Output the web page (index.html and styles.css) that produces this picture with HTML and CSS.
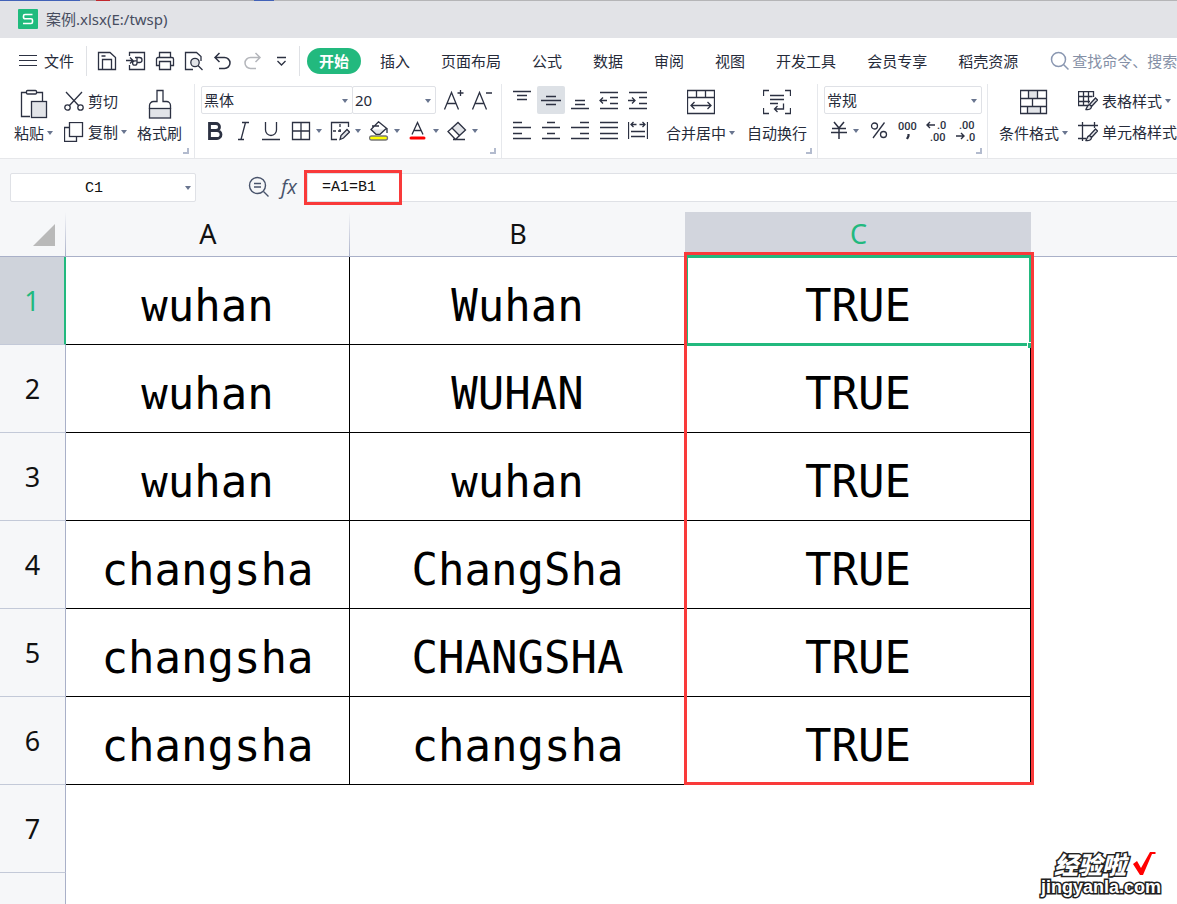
FILE: index.html
```html
<!DOCTYPE html>
<html lang="zh-CN">
<head>
<meta charset="utf-8">
<title>案例.xlsx</title>
<link rel="stylesheet" href="styles.css">
</head>
<body>
<div class="app">
  <header class="titlebar">
    <svg class="logo" width="20" height="20" viewBox="0 0 20 20"><rect width="20" height="20" rx="1" fill="#1fbb7d"/><path d="M14.5 5.500H7a1.500 1.500 0 0 0-1.500 1.500v1.300a1.500 1.500 0 0 0 1.500 1.500h6a1.500 1.500 0 0 1 1.500 1.500v1.700a1.500 1.500 0 0 1-1.500 1.500H5" fill="none" stroke="#fff" stroke-width="1.600"/></svg>
    <span class="doc-name">案例.xlsx(E:/twsp)</span>
  </header>

  <nav class="menubar">
    <button class="file-menu"><svg class="ic" width="18" height="14" viewBox="0 0 18 14"><path d="M0 1.500h18M0 6.500h18M0 11.500h18" stroke-width="1.200"/></svg>文件</button>
    <div class="quick">
      <button aria-label="保存"><svg class="ic" width="20" height="20" viewBox="0 0 20 20"><path d="M1.500 1.500h11.500l5.500 5v12h-17zM5.500 18V8.500h9V18M4.500 5h4"/></svg></button>
      <button aria-label="输出为PDF"><svg class="ic" width="20" height="20" viewBox="0 0 20 20"><path d="M3.500 5V1.500h15v17h-15V14M0 9.500h6.500M4 6.500l3 3-3 3M9 6.500h4.500a2.500 2.500 0 0 1 0 5H11M11 6.500v5.500a2.200 2.200 0 1 1-2.200-2.200h1.500"/></svg></button>
      <button aria-label="打印"><svg class="ic" width="20" height="20" viewBox="0 0 20 20"><path d="M4.500 6V1.500h11V6M4.500 14.500h-3V8a1.500 1.500 0 0 1 1.500-1.500h14A1.500 1.500 0 0 1 18.500 8v6.500h-3M4.500 10.500h11v8h-11z"/></svg></button>
      <button aria-label="打印预览"><svg class="ic" width="20" height="20" viewBox="0 0 20 20"><path d="M9 18.500H1.500v-17h11l4.500 4V10M14 14.500l4.500 4.500"/><circle cx="11" cy="11.500" r="4.200" fill="#e2e4e8"/></svg></button>
      <button aria-label="撤销"><svg class="ic" width="20" height="20" viewBox="0 0 20 20"><path d="M6.500 2l-4.500 4.500 4.500 4.500M2 6.500h9.500a5.500 5.500 0 0 1 0 11H6" stroke-width="1.500"/></svg></button>
      <button aria-label="恢复"><svg class="ic faint" width="20" height="20" viewBox="0 0 20 20"><path d="M13.500 2l4.500 4.500-4.500 4.500M18 6.500H8.500a5.500 5.500 0 0 0 0 11H14" stroke-width="1.500"/></svg></button>
      <button aria-label="更多"><svg class="ic" width="20" height="20" viewBox="0 0 20 20"><path d="M6 6.500h9M6.500 10l4 4 4-4"/></svg></button>
    </div>
    <div class="tabs">
      <button class="tab active">开始</button><button class="tab">插入</button><button class="tab">页面布局</button><button class="tab">公式</button><button class="tab">数据</button><button class="tab">审阅</button><button class="tab">视图</button><button class="tab">开发工具</button><button class="tab">会员专享</button><button class="tab">稻壳资源</button>
    </div>
    <label class="search"><svg width="20" height="20" viewBox="0 0 20 20" fill="none" stroke="#8a97b1" stroke-width="1.500"><circle cx="8.500" cy="8.500" r="7"/><path d="M13.500 13.500l5 5"/></svg><input type="text" aria-label="搜索" placeholder="查找命令、搜索"></label>
  </nav>

  <section class="ribbon">
    <div class="group clipboard">
      <button class="big paste"><svg class="ic" width="28" height="30" viewBox="0 0 28 30"><path d="M10 27.500H1.500v-24h5M17 3.500h5.500V12"/><rect x="6.500" y="1.500" width="10" height="3.500" rx="1"/><rect x="11.500" y="12.500" width="15" height="16" fill="#e2e4e8"/></svg><span class="caret-label">粘贴</span></button>
      <div class="stack">
        <button class="line"><svg class="ic" width="20" height="20" viewBox="0 0 20 20"><path d="M2 1l13 14M18 1L5 15"/><circle cx="3.500" cy="16.500" r="2.700"/><circle cx="16.500" cy="16.500" r="2.700"/></svg>剪切</button>
        <button class="line"><svg class="ic" width="20" height="20" viewBox="0 0 20 20"><path d="M5.500 5.500h-5v14h12v-5"/><rect x="5.500" y=".5" width="13" height="14"/></svg><span class="caret-label">复制</span></button>
      </div>
      <button class="big"><svg class="ic" width="26" height="30" viewBox="0 0 26 30"><path d="M2.500 20v-3.500a4 4 0 0 1 4-4h3.500v-11h6v11h3.500a4 4 0 0 1 4 4V20"/><rect x="2.500" y="19.500" width="21" height="9.500" fill="#e2e4e8"/></svg>格式刷</button>
      <i class="corner"></i>
    </div>

    <div class="group font">
      <div class="row">
        <span class="pick name"><select aria-label="字体"><option>黑体</option></select></span><span class="pick size"><select aria-label="字号"><option>20</option></select></span>
        <button class="tool grow" aria-label="增大字号"><svg class="ic" width="22" height="22" viewBox="0 0 22 22"><path d="M1.500 20.500l7-17 7 17M4 14.500h9M14.500 4h6M17.500 1v6"/></svg></button>
        <button class="tool" aria-label="减小字号"><svg class="ic" width="22" height="22" viewBox="0 0 22 22"><path d="M1.500 20.500l7-17 7 17M4 14.500h9M15 4h6"/></svg></button>
      </div>
      <div class="row">
        <button class="tool" aria-label="加粗"><svg class="ic" width="20" height="20" viewBox="0 0 20 20"><path d="M4.500 2.500h6.500a3.500 3.500 0 0 1 0 7h-6.500zM4.500 9.500h7.500a4 4 0 0 1 0 8h-7.500z" stroke-width="2.800"/></svg></button>
        <button class="tool" aria-label="倾斜"><svg class="ic" width="20" height="20" viewBox="0 0 20 20"><path d="M9 1.500h7M5 18.500h6M12.500 1.500l-4.500 17"/></svg></button>
        <button class="tool" aria-label="下划线"><svg class="ic" width="20" height="20" viewBox="0 0 20 20"><path d="M4.500 1v8a5.500 5.500 0 0 0 11 0V1M1 18.500h18"/></svg></button>
        <button class="drop first" aria-label="边框"><svg class="ic" width="20" height="20" viewBox="0 0 20 20"><path d="M1.500 1.500h17v17h-17zM10 1.500v17M1.500 10h17"/></svg></button>
        <button class="drop" aria-label="绘图边框"><svg class="ic" width="20" height="20" viewBox="0 0 20 20"><path d="M18.500 6V1.500h-17v17H7"/><path d="M3 10h10M10 3v10" stroke-dasharray="3 2"/><path d="M10 18.500l1-4 6-6 2.500 2.500-6 6z" fill="#e2e4e8"/></svg></button>
        <button class="drop" aria-label="填充颜色"><svg class="ic" width="20" height="20" viewBox="0 0 20 20"><path d="M2 8.500h15l-6.500 5.500H7z" fill="#e2e4e8" stroke="none"/><path d="M9.500 .8l8 6.500-6.500 6H7L2 8.500zM3 5h7M18 7v5"/><rect x=".5" y="15" width="18" height="4" rx="2" fill="#ff0" stroke="#777"/></svg></button>
        <button class="drop" aria-label="字体颜色"><svg class="ic" width="20" height="20" viewBox="0 0 20 20"><path d="M4 13.500l5.500-12 5.500 12M6 9.500h7"/><path d="M3 17h13" stroke="red" stroke-width="3" stroke-linecap="round"/></svg></button>
        <button class="drop" aria-label="清除"><svg class="ic" width="20" height="20" viewBox="0 0 20 20"><path d="M5 7l6-5.500 7.500 7.500-6 5.500z" fill="#e2e4e8"/><path d="M5 7l-4 3.500 7.500 8 4-4M6 18.500h12"/></svg></button>
      </div>
      <i class="corner"></i>
    </div>

    <div class="group align">
      <div class="pad">
        <button class="tool" aria-label="顶端对齐"><svg class="ic" width="20" height="20" viewBox="0 0 20 20"><path d="M1 1.500h18M5 5.500h10M5 9.500h10"/></svg></button>
        <button class="tool on" aria-label="垂直居中"><svg class="ic" width="20" height="20" viewBox="0 0 20 20"><path d="M5 6.500h10M0 10.500h20M5 14.500h10"/></svg></button>
        <button class="tool" aria-label="底端对齐"><svg class="ic" width="20" height="20" viewBox="0 0 20 20"><path d="M5 10.500h10M5 14.500h10M1 18.500h18"/></svg></button>
        <button class="tool" aria-label="减少缩进"><svg class="ic" width="20" height="20" viewBox="0 0 20 20"><path d="M1 2.500h18M1 18.500h18M11 7.500h8M11 13.500h8M1 10.500h7M4 7.500l-3 3 3 3"/></svg></button>
        <button class="tool" aria-label="增加缩进"><svg class="ic" width="20" height="20" viewBox="0 0 20 20"><path d="M1 2.500h18M1 18.500h18M11 7.500h8M11 13.500h8M0 10.500h7M4 7.500l3 3-3 3"/></svg></button>
        <button class="tool" aria-label="左对齐"><svg class="ic" width="20" height="20" viewBox="0 0 20 20"><path d="M1 1.500h9M1 6.500h18M1 12.500h9M1 17.500h18"/></svg></button>
        <button class="tool" aria-label="水平居中"><svg class="ic" width="20" height="20" viewBox="0 0 20 20"><path d="M6 1.500h8M1 6.500h18M6 12.500h8M1 17.500h18"/></svg></button>
        <button class="tool" aria-label="右对齐"><svg class="ic" width="20" height="20" viewBox="0 0 20 20"><path d="M10 1.500h9M1 6.500h18M10 12.500h9M1 17.500h18"/></svg></button>
        <button class="tool" aria-label="两端对齐"><svg class="ic" width="20" height="20" viewBox="0 0 20 20"><path d="M1 1.500h18M1 6.500h18M1 12.500h18M1 17.500h18"/></svg></button>
        <button class="tool" aria-label="分散对齐"><svg class="ic" width="20" height="20" viewBox="0 0 20 20"><path d="M.5 1v17M19.500 1v17M3 3.500h5.500M11.500 3.500H17M5.500 1L3 3.500 5.500 6M14.500 1L17 3.500 14.500 6M3 10.500h14M3 15.500h14"/></svg></button>
      </div>
      <button class="big merge"><svg class="ic" width="28" height="26" viewBox="0 0 28 26"><path d="M.5 1.500h27v23H.5zM.5 8.500h27M9.500 1.500v7M18.500 1.500v7M4 16.500h20M7.500 13L4 16.500 7.500 20M20.500 13l3.500 3.500-3.500 3.500"/></svg><span class="caret-label">合并居中</span></button>
      <button class="big wrap"><svg class="ic" width="28" height="26" viewBox="0 0 28 26"><path d="M.5 7V1.500H6M22 1.500h5.500V7M.5 19v5.500H6M22 24.500h5.500V19M7 6.500h14M7 10.500h14M7 14.500h8M20.500 14.500v5.500h-9M14.500 17l-3 3 3 3"/></svg>自动换行</button>
      <i class="corner"></i>
    </div>

    <div class="group number">
      <div class="row"><span class="pick format"><select aria-label="数字格式"><option>常规</option></select></span></div>
      <div class="row figures">
        <button class="drop" aria-label="货币"><svg class="ic" width="20" height="20" viewBox="0 0 20 20"><path d="M5 1l5 6 5-6M3 7.500h14M2 11.500h16M10 7v11" stroke-width="1.500"/></svg></button>
        <button class="tool" aria-label="百分比"><svg class="ic" width="20" height="20" viewBox="0 0 20 20"><path d="M15.500 1.500L4 17"/><circle cx="5.500" cy="5" r="3"/><circle cx="14.500" cy="13.500" r="3"/></svg></button>
        <button class="tool" aria-label="千位分隔"><svg class="digits" width="24" height="24" viewBox="0 0 24 24"><text x="2" y="11">000</text><path d="M12.500 15v2l-1.500 3" fill="none" stroke="#2c3142" stroke-width="2.200"/></svg></button>
        <button class="tool" aria-label="增加小数"><svg class="digits" width="24" height="28" viewBox="0 0 24 28"><text x="12" y="12">.0</text><text x="5" y="24">.00</text><path d="M2 8h8M5 5L2 8l3 3" fill="none" stroke="#2c3142" stroke-width="1.400"/></svg></button>
        <button class="tool" aria-label="减少小数"><svg class="digits" width="24" height="28" viewBox="0 0 24 28"><text x="5" y="12">.00</text><text x="12" y="24">.0</text><path d="M2 19h8M7 16l3 3-3 3" fill="none" stroke="#2c3142" stroke-width="1.400"/></svg></button>
      </div>
      <i class="corner"></i>
    </div>

    <div class="group styles">
      <button class="big"><svg class="ic" width="28" height="26" viewBox="0 0 28 26"><path d="M8 2h10v7H8zM8 17h12v7H8z" fill="#e2e4e8" stroke="none"/><path d="M.5 1.500h26v23H.5zM.5 9.500h26M.5 17.500h26M8.500 1.500v8M17.500 1.500v8M12.500 9.500v8M7.500 17.500v7M20.500 17.500v7"/></svg><span class="caret-label">条件格式</span></button>
      <div class="stack">
        <button class="line"><svg class="ic" width="20" height="20" viewBox="0 0 20 20"><path d="M10 14.500H.5V.5h15V6M.5 5.500h14M.5 10.500H12M5.500.5v14M10.500.5v12"/><path d="M17.500 7l2 2-6 6.500-2-2zM11.500 13.500c-2 .5-2.500 2.500-3.500 5 3.500.5 5.500-1 5.500-3" fill="#e2e4e8"/></svg><span class="caret-label">表格样式</span></button>
        <button class="line"><svg class="ic" width="20" height="20" viewBox="0 0 20 20"><path d="M4.500 0v19M0 3.500h20M16.500 0v6M0 16.500h8"/><path d="M17.500 7l2 2-6 6.500-2-2zM11.500 13.500c-2 .5-2.500 2.500-3.500 5 3.500.5 5.500-1 5.500-3" fill="#e2e4e8"/></svg>单元格样式</button>
      </div>
    </div>
  </section>

  <section class="formula">
    <span class="pick cell-name"><select aria-label="名称框"><option>C1</option></select></span>
    <button class="lens" aria-label="公式求值"><svg width="22" height="22" viewBox="0 0 22 22" fill="none" stroke="#48536b" stroke-width="1.400"><circle cx="9.500" cy="9.500" r="8"/><path d="M15.500 15.500l5 5M6 7.500h7M6 11h7"/></svg></button>
    <button class="fx" aria-label="插入函数">fx</button>
    <div class="entry"><input type="text" aria-label="编辑栏" value="=A1=B1"><i class="mark"></i></div>
  </section>

  <main class="sheet">
    <table class="cells">
      <colgroup><col class="w-row"><col class="w-a"><col class="w-b"><col class="w-c"><col></colgroup>
      <thead><tr><th class="all"><svg width="22" height="22" viewBox="0 0 22 22"><path d="M22 0v22H0z" fill="#b9b9b9"/></svg></th><th>A</th><th class="before-sel">B</th><th class="sel">C</th><th class="rest"></th></tr></thead>
      <tbody>
        <tr><th class="sel">1</th><td>wuhan</td><td>Wuhan</td><td class="current">TRUE<i class="cursor"></i><i class="handle"></i><i class="frame"></i></td><td class="rest"></td></tr>
        <tr><th>2</th><td>wuhan</td><td>WUHAN</td><td>TRUE</td><td class="rest"></td></tr>
        <tr><th>3</th><td>wuhan</td><td>wuhan</td><td>TRUE</td><td class="rest"></td></tr>
        <tr><th>4</th><td>changsha</td><td>ChangSha</td><td>TRUE</td><td class="rest"></td></tr>
        <tr><th>5</th><td>changsha</td><td>CHANGSHA</td><td>TRUE</td><td class="rest"></td></tr>
        <tr><th>6</th><td>changsha</td><td>changsha</td><td>TRUE</td><td class="rest"></td></tr>
        <tr><th>7</th><td class="rest" colspan="4"></td></tr>
        <tr><th></th><td class="rest" colspan="4"></td></tr>
      </tbody>
    </table>
  </main>

  <div class="watermark">
    <div class="wm-top"><span>经验啦</span><svg width="24" height="26" viewBox="0 0 24 26"><path d="M1 13l4-3 4 7L18 1h5.500v2H20L11 24H8z" fill="#f00"/></svg></div>
    <div class="wm-site">jingyanla.com</div>
  </div>
</div>
</body>
</html>
```
FILE: styles.css
```css
* { box-sizing: border-box; }
body { margin: 0; font: 15px/20px "Noto Sans", "Noto Sans CJK SC", sans-serif; color: #262b3a; }
button, select, input { font: inherit; color: inherit; background: none; border: 0; padding: 0; margin: 0; border-radius: 0; outline: none; }
select { appearance: none; }
svg { display: block; flex: none; }
.ic { fill: none; stroke: #2c3142; stroke-width: 1.3; }
.ic.faint { stroke: #b4b6bb; }

.app { position: relative; display: flex; flex-direction: column; height: 100vh; overflow: hidden; background: #fff; }

.titlebar { flex: none; display: flex; align-items: center; gap: 8px; height: 38px; padding-left: 18px; background: linear-gradient(90deg, #4262b8 80px, #a9a9ad 80px 96px, #c1272d 96px 110px, #a9a9ad 110px 254px, #4262b8 254px 274px, #b5b5b7 274px) top / 100% 1px no-repeat #e2e3e7; }
.doc-name { color: #474d5f; }

.menubar { flex: none; display: flex; align-items: center; height: 46px; white-space: nowrap; }
.file-menu { display: flex; align-items: center; gap: 7px; width: 87px; height: 30px; padding-left: 19px; border-right: 1px solid #dfe1e5; flex: none; }
.quick { display: flex; flex: none; align-items: center; gap: 9px; width: 213px; height: 30px; padding-left: 10px; border-right: 1px solid #dfe1e5; }
.tabs { display: flex; flex: none; gap: 31px; margin-left: 7px; }
.tab.active { margin-right: -12px; padding: 3px 12px; border-radius: 13px; background: #22b97e; color: #fff; font-weight: 700; }
.search { display: flex; align-items: center; gap: 2px; flex: 1; min-width: 0; margin-left: 32px; overflow: hidden; }
.search input { flex: 1; min-width: 0; }
.search input::placeholder { color: #8590a6; opacity: 1; }

.ribbon { flex: none; display: flex; height: 75px; border-bottom: 1px solid #e6e7ea; overflow: hidden; white-space: nowrap; }
.group { position: relative; display: flex; flex: none; padding-top: 2px; border-right: 1px solid #e6e8ec; }
.corner { position: absolute; right: 5px; bottom: 4px; width: 6px; height: 6px; border: solid #b3bbce; border-width: 0 2px 2px 0; }
.big { display: flex; flex-direction: column; align-items: center; justify-content: space-between; height: 57px; padding-top: 3px; }
.stack { display: flex; flex-direction: column; gap: 2px; }
.line { display: flex; align-items: center; gap: 4px; height: 29px; }
.caret-label, .drop { display: flex; align-items: center; gap: 3px; }
.caret-label::after, .drop::after, .pick::after { content: ""; flex: none; border: 3px solid transparent; border-top: 4px solid #69758f; border-bottom: 0; }
.row { display: flex; align-items: center; height: 28px; }
.tool { display: flex; align-items: center; justify-content: center; width: 28px; height: 28px; flex: none; }
.tool.on { background: #dde1e6; border-radius: 2px; }
.pick { position: relative; display: flex; height: 28px; border: 1px solid #dfe1e6; border-radius: 2px; background: #fff; }
.pick select { width: 100%; padding-left: 2px; }
.pick::after { position: absolute; right: 4px; top: 12px; }

.clipboard { width: 195px; padding-left: 14px; }
.clipboard .stack { margin: 0 10px 0 11px; }
.font { flex-direction: column; gap: 3px; width: 307px; padding-left: 6px; }
.name { width: 152px; }
.size { width: 84px; margin-left: -1px; }
.grow { margin-left: 4px; }
.drop { gap: 5px; width: 39px; height: 28px; padding-left: 1px; flex: none; }
.drop.first { margin-left: 5px; }
.align { width: 316px; padding-left: 6px; }
.pad { display: grid; grid-template-columns: repeat(5, 28px); grid-auto-rows: 28px; gap: 3px 1px; margin-right: 14px; }
.wrap { margin-left: 12px; }
.number { flex-direction: column; gap: 3px; width: 170px; padding-left: 6px; }
.format { width: 158px; }
.figures { gap: 1px; padding-left: 4px; }
.figures .drop { gap: 4px; width: 36px; }
.digits { fill: #2c3142; font: 500 11px "Roboto", sans-serif; }
.styles { padding-left: 11px; border: 0; }
.styles .stack { margin-left: 10px; }

.formula { flex: none; display: flex; align-items: center; height: 53px; padding: 3px 0 0 10px; background: #f6f7f9; }
.cell-name { width: 186px; height: 29px; font: 15px "Liberation Mono", monospace; color: #111; }
.cell-name select { padding: 2px 18px 0 0; text-align: center; text-align-last: center; }
.lens { margin-left: 52px; }
.fx { width: 20px; margin-left: 9px; font: italic 20px/24px "Open Sans", sans-serif; color: #48536b; }
.entry { position: relative; flex: 1; height: 29px; margin-left: 8px; border: 1px solid #dfe1e6; border-right: 0; background: #fff; }
.entry input { width: 100%; height: 27px; padding-left: 14px; font: 15px "Liberation Mono", monospace; color: #111; }
.mark { position: absolute; left: -4px; top: -4px; width: 98px; height: 35px; border: 3px solid #f93a3a; }

.sheet { flex: 1; min-height: 0; overflow: hidden; }
.cells { width: 100%; table-layout: fixed; border-collapse: separate; border-spacing: 0; }
.w-row { width: 66px; }
.w-a { width: 284px; }
.w-b { width: 336px; }
.w-c { width: 345px; }
.cells th, .cells td { padding: 0; text-align: center; vertical-align: middle; }
.cells th { font: 27px/32px "Noto Sans", sans-serif; color: #111; background: #f6f7f9; border-bottom: 1px solid #a9b0c8; }
.cells thead th { height: 45px; background: linear-gradient(#f6f7f9, #a9b0c8) right / 1px 100% no-repeat #f6f7f9; }
.cells thead .before-sel { background: linear-gradient(#d2d5dd, #d2d5dd) right / 1px 100% no-repeat #f6f7f9; }
.cells thead .sel { background: #d2d5dd; }
.cells thead .rest { background: #f6f7f9; }
.cells .sel { color: #22b97e; }
.cells tbody th { height: 88px; border-right: 1px solid #a9b0c8; border-bottom-color: #c3c9d8; }
.cells tbody .sel { background: #cfd3db; border-right: 2px solid #22b97e; }
.all svg { margin: 2px 11px 0 auto; }
.cells td { border: solid #000; border-width: 0 1px 1px 0; padding-top: 10px; font: 44px/60px "DejaVu Sans Mono", monospace; color: #000; }
.cells td.rest { border: 0; }
.current { position: relative; }
.cursor { position: absolute; left: -1px; top: -2px; right: -2px; bottom: -2px; border: 3px solid #22b97e; }
.handle { position: absolute; right: -2px; bottom: -4px; width: 5px; height: 6px; background: #22b97e; border: solid #fff; border-width: 1px 0 0 1px; }
.frame { position: absolute; left: -2px; top: -5px; right: -4px; height: 533px; border: 3px solid #f93a3a; }

.watermark { position: absolute; right: 16px; bottom: 7px; color: #fff; -webkit-text-stroke: 3px #222; paint-order: stroke fill; }
.wm-top { display: flex; gap: 6px; margin-left: 13px; font: italic 900 24px/26px "Noto Sans CJK SC", sans-serif; }
.wm-site { font: 700 18px/20px "Liberation Sans", sans-serif; }
```
